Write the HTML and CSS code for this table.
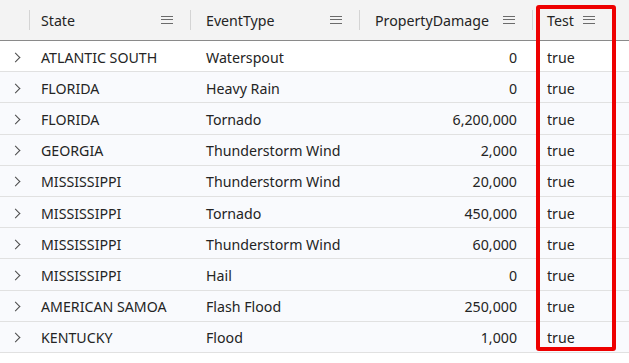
FILE: index.html
```html
<!DOCTYPE html>
<html>
<head>
<meta charset="utf-8">
<link rel="stylesheet" href="styles.css">
</head>
<body>
<div class="grid">
  <div class="row head">
    <div class="cell c0"></div>
    <div class="cell c1"><span class="label">State</span><span class="menu"></span></div>
    <div class="cell c2 sep"><span class="label">EventType</span><span class="menu"></span></div>
    <div class="cell c3 sep"><span class="label">PropertyDamage</span><span class="menu"></span></div>
    <div class="cell c4 sep"><span class="label">Test</span><span class="menu"></span></div>
    <div class="cell c5"></div>
  </div>
  <div class="row first">
    <div class="cell c0"><span class="chev"></span></div>
    <div class="cell c1">ATLANTIC SOUTH</div>
    <div class="cell c2">Waterspout</div>
    <div class="cell c3 num">0</div>
    <div class="cell c4">true</div>
    <div class="cell c5"></div>
  </div>
  <div class="row">
    <div class="cell c0"><span class="chev"></span></div>
    <div class="cell c1">FLORIDA</div>
    <div class="cell c2">Heavy Rain</div>
    <div class="cell c3 num">0</div>
    <div class="cell c4">true</div>
    <div class="cell c5"></div>
  </div>
  <div class="row">
    <div class="cell c0"><span class="chev"></span></div>
    <div class="cell c1">FLORIDA</div>
    <div class="cell c2">Tornado</div>
    <div class="cell c3 num">6,200,000</div>
    <div class="cell c4">true</div>
    <div class="cell c5"></div>
  </div>
  <div class="row">
    <div class="cell c0"><span class="chev"></span></div>
    <div class="cell c1">GEORGIA</div>
    <div class="cell c2">Thunderstorm Wind</div>
    <div class="cell c3 num">2,000</div>
    <div class="cell c4">true</div>
    <div class="cell c5"></div>
  </div>
  <div class="row">
    <div class="cell c0"><span class="chev"></span></div>
    <div class="cell c1">MISSISSIPPI</div>
    <div class="cell c2">Thunderstorm Wind</div>
    <div class="cell c3 num">20,000</div>
    <div class="cell c4">true</div>
    <div class="cell c5"></div>
  </div>
  <div class="row">
    <div class="cell c0"><span class="chev"></span></div>
    <div class="cell c1">MISSISSIPPI</div>
    <div class="cell c2">Tornado</div>
    <div class="cell c3 num">450,000</div>
    <div class="cell c4">true</div>
    <div class="cell c5"></div>
  </div>
  <div class="row">
    <div class="cell c0"><span class="chev"></span></div>
    <div class="cell c1">MISSISSIPPI</div>
    <div class="cell c2">Thunderstorm Wind</div>
    <div class="cell c3 num">60,000</div>
    <div class="cell c4">true</div>
    <div class="cell c5"></div>
  </div>
  <div class="row">
    <div class="cell c0"><span class="chev"></span></div>
    <div class="cell c1">MISSISSIPPI</div>
    <div class="cell c2">Hail</div>
    <div class="cell c3 num">0</div>
    <div class="cell c4">true</div>
    <div class="cell c5"></div>
  </div>
  <div class="row">
    <div class="cell c0"><span class="chev"></span></div>
    <div class="cell c1">AMERICAN SAMOA</div>
    <div class="cell c2">Flash Flood</div>
    <div class="cell c3 num">250,000</div>
    <div class="cell c4">true</div>
    <div class="cell c5"></div>
  </div>
  <div class="row">
    <div class="cell c0"><span class="chev"></span></div>
    <div class="cell c1">KENTUCKY</div>
    <div class="cell c2">Flood</div>
    <div class="cell c3 num">1,000</div>
    <div class="cell c4">true</div>
    <div class="cell c5"></div>
  </div>
  <div class="highlight"></div>
</div>
</body>
</html>
```

FILE: styles.css
```css
html, body {
  margin: 0;
  padding: 0;
  background: #ffffff;
}
body {
  font-family: "Noto Sans", "Open Sans", sans-serif;
  font-size: 14.2px;
  color: #242424;
}
.grid {
  position: relative;
  width: 629px;
}
.row {
  display: grid;
  grid-template-columns: 30px 160px 169px 173px 82px 15px;
  height: 31.2px;
  box-sizing: border-box;
  border-bottom: 1px solid #e1e1e1;
  background: #f9fafd;
}
.row.first {
  background: #ffffff;
}
.row.head {
  height: 41px;
  background: #f3f3f3;
  border-bottom: 1px solid #8a8a8a;
}
.cell {
  display: flex;
  align-items: center;
  white-space: nowrap;
  overflow: hidden;
  box-sizing: border-box;
  padding-top: 2px;
}
.head .cell { padding-top: 0; }
.c1 { padding-left: 11px; padding-right: 17px; }
.c2, .c3, .c4 { padding-left: 16px; padding-right: 17px; }
.c4 { padding-left: 15px; }
.num { justify-content: flex-end; padding-right: 15px; }
.head .cell { justify-content: space-between; }
.head .c0 {
  background: linear-gradient(#d4d4d4, #d4d4d4) right 10px / 1px 20px no-repeat;
}
.sep {
  background: linear-gradient(#d4d4d4, #d4d4d4) left 10px / 1px 20px no-repeat;
}
.head .c4 {
  justify-content: flex-start;
}
.head .c4 .menu {
  margin-left: 9px;
}
.menu {
  width: 12px;
  height: 9px;
  flex: none;
  background:
    linear-gradient(#6b6b6b, #6b6b6b) 0 0 / 12px 1.4px no-repeat,
    linear-gradient(#6b6b6b, #6b6b6b) 0 3.6px / 12px 1.4px no-repeat,
    linear-gradient(#6b6b6b, #6b6b6b) 0 7.4px / 12px 1.4px no-repeat;
}
.c0 {
  justify-content: flex-start;
  padding-left: 12px;
}
.chev {
  width: 6px;
  height: 6px;
  border-right: 1.3px solid #4a4a4a;
  border-bottom: 1.3px solid #4a4a4a;
  transform: rotate(-45deg);
}
.highlight {
  position: absolute;
  left: 536px;
  top: 5px;
  width: 80px;
  height: 346px;
  box-sizing: border-box;
  border: 4px solid #ee0000;
  border-radius: 3px;
}
```
